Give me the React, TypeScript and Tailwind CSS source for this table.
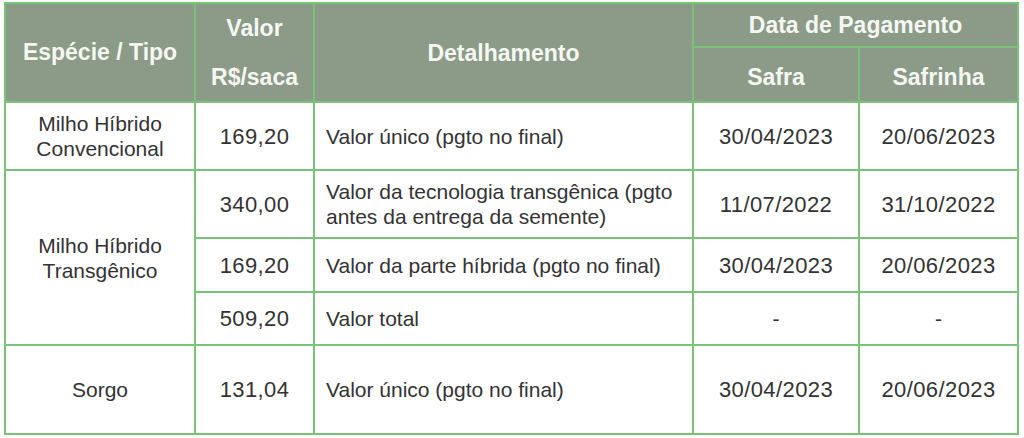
const th = 'border-2 border-[#77c477] bg-[#8b9b87] text-[#f5f7f2] font-bold text-[23px] text-center align-middle p-0';
const td = 'border-2 border-[#77c477] bg-white text-[#333333] text-[21px] text-center align-middle p-0 leading-[25px]';
const num = `${td} !text-[22px] tracking-[0.4px]`;
const det = `${td} !text-left pl-[11px]`;

export default function App() {
  return (
    <div className="w-[1024px] h-[438px] bg-white pl-[4px] pt-[2px]" style={{ fontFamily: '"Liberation Sans", Arial, sans-serif' }}>
      <table className="table-fixed border-collapse w-[1013px]">
        <colgroup>
          <col className="w-[190px]" />
          <col className="w-[119px]" />
          <col className="w-[379px]" />
          <col className="w-[166px]" />
          <col className="w-[159px]" />
        </colgroup>
        <thead>
          <tr className="h-[44px]">
            <th rowSpan={2} className={th}>Espécie / Tipo</th>
            <th rowSpan={2} className={th}>
              <div className="flex flex-col items-center justify-between h-[95px] py-[10px] leading-[26px]">
                <span>Valor</span>
                <span>R$/saca</span>
              </div>
            </th>
            <th rowSpan={2} className={`${th} pt-[2px]`}>Detalhamento</th>
            <th colSpan={2} className={th}>Data de Pagamento</th>
          </tr>
          <tr className="h-[55px]">
            <th className={`${th} pt-[5px]`}>Safra</th>
            <th className={`${th} pt-[5px]`}>Safrinha</th>
          </tr>
        </thead>
        <tbody>
          <tr className="h-[68px]">
            <td className={td}>
              Milho Híbrido
              <br />
              Convencional
            </td>
            <td className={num}>169,20</td>
            <td className={det}>Valor único (pgto no final)</td>
            <td className={num}>30/04/2023</td>
            <td className={num}>20/06/2023</td>
          </tr>
          <tr className="h-[68px]">
            <td rowSpan={3} className={td}>
              Milho Híbrido
              <br />
              Transgênico
            </td>
            <td className={num}>340,00</td>
            <td className={det}>
              Valor da tecnologia transgênica (pgto
              <br />
              antes da entrega da semente)
            </td>
            <td className={num}>11/07/2022</td>
            <td className={num}>31/10/2022</td>
          </tr>
          <tr className="h-[54px]">
            <td className={num}>169,20</td>
            <td className={det}>Valor da parte híbrida (pgto no final)</td>
            <td className={num}>30/04/2023</td>
            <td className={num}>20/06/2023</td>
          </tr>
          <tr className="h-[53px]">
            <td className={num}>509,20</td>
            <td className={det}>Valor total</td>
            <td className={td}>-</td>
            <td className={td}>-</td>
          </tr>
          <tr className="h-[89px]">
            <td className={td}>Sorgo</td>
            <td className={num}>131,04</td>
            <td className={det}>Valor único (pgto no final)</td>
            <td className={num}>30/04/2023</td>
            <td className={num}>20/06/2023</td>
          </tr>
        </tbody>
      </table>
    </div>
  );
}
